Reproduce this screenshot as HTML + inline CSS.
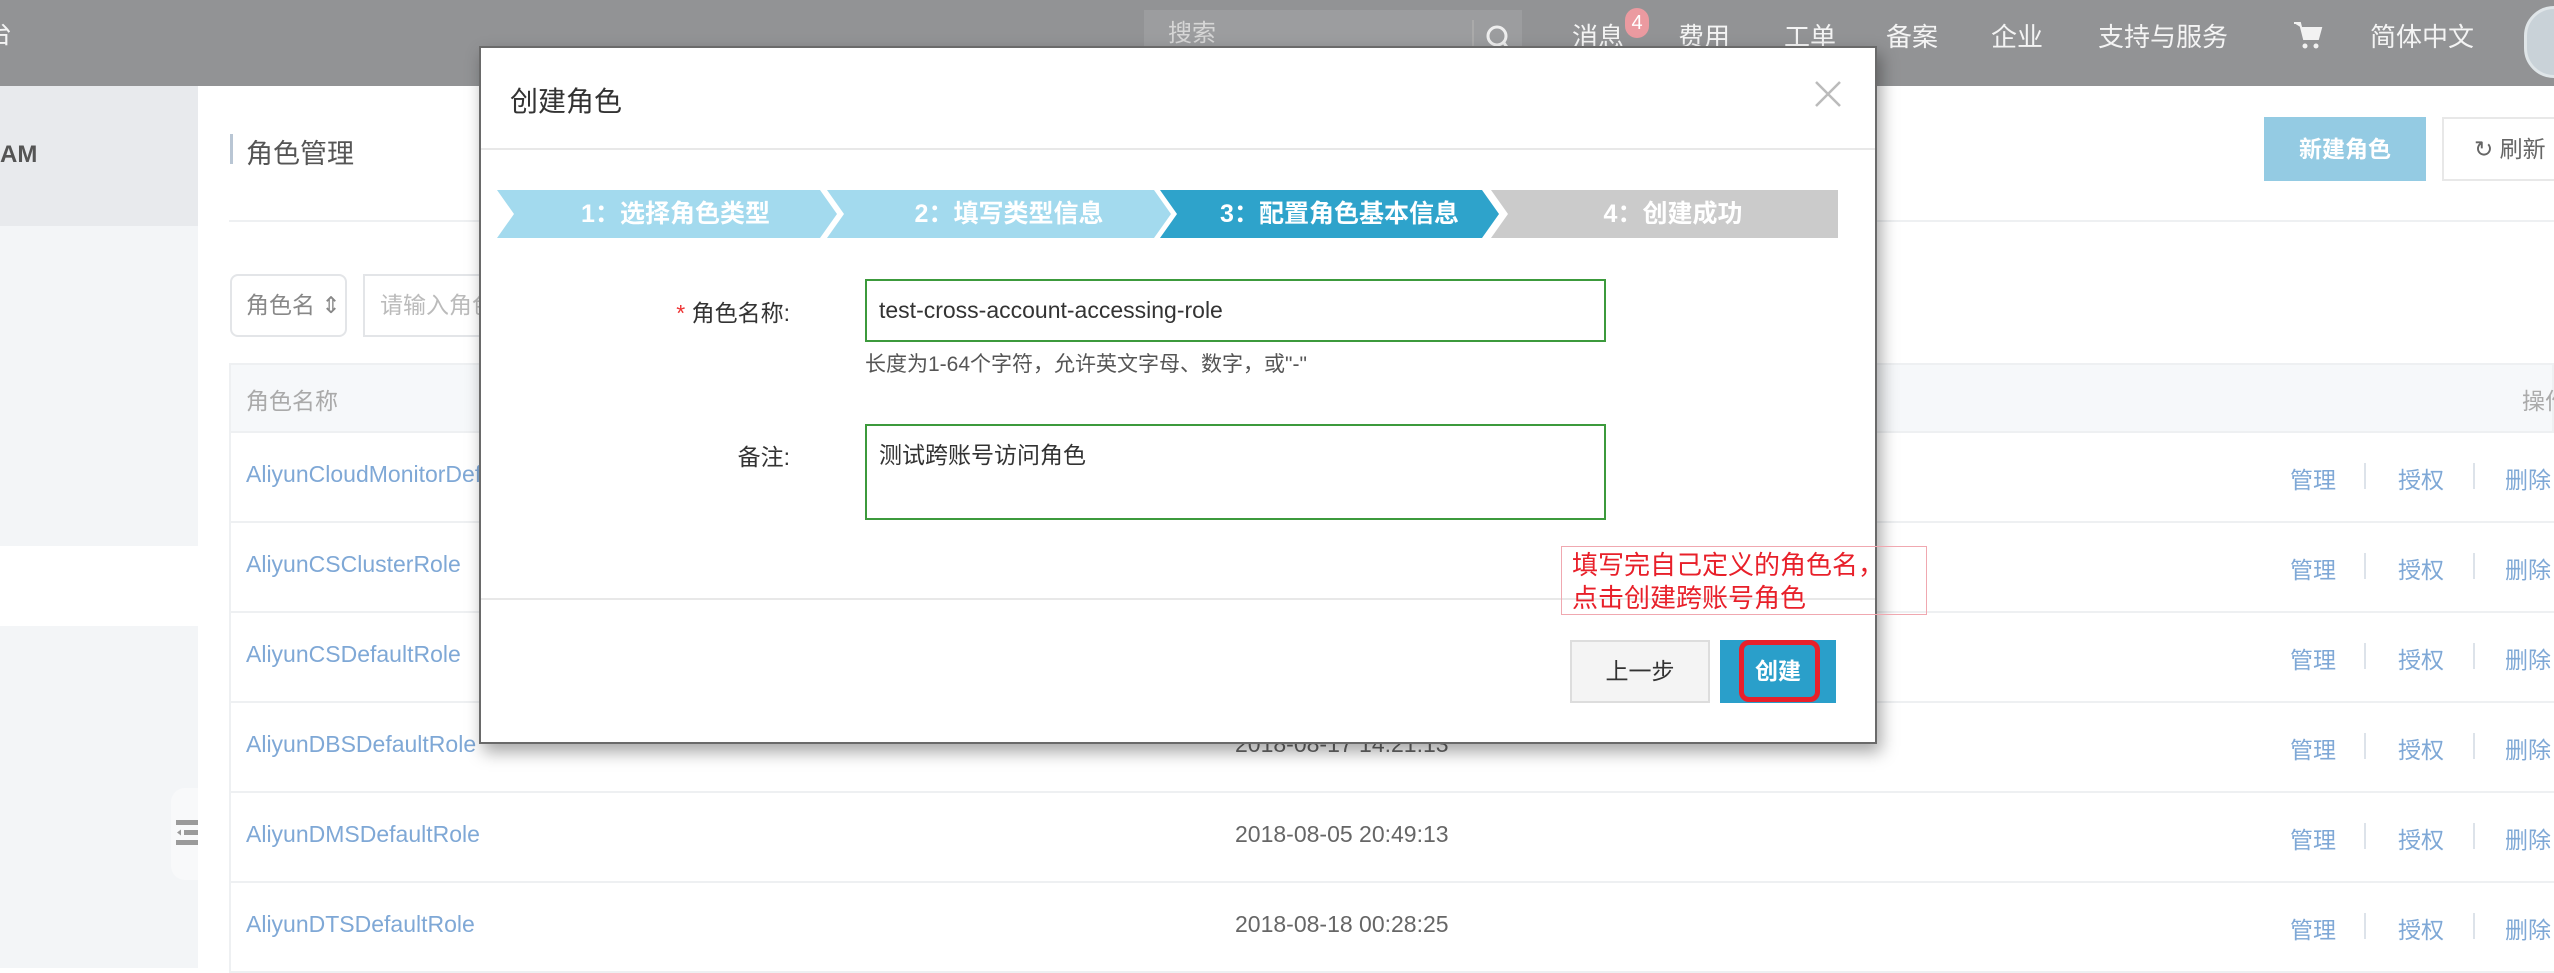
<!DOCTYPE html>
<html><head><meta charset="utf-8">
<style>
*{margin:0;padding:0;box-sizing:border-box;white-space:nowrap}
body{width:2554px;height:968px;overflow:hidden;position:relative;background:#fff;font-family:"Liberation Sans","Noto Sans CJK SC",sans-serif;color:#333}
.a{position:absolute}
.top{left:0;top:0;width:2554px;height:86px;background:#929395}
.nav{top:17px;font-size:26px;color:#f4f4f4;line-height:40px}
.side{left:0;top:86px;width:198px;height:882px;background:#f3f5f7}
.t{font-size:23px;line-height:30px}
.row{left:229px;width:2325px;height:90px;border-bottom:2px solid #eef0f2;border-left:2px solid #eef0f2}
.nm{left:15px;top:28px;color:#7fa8d6;font-size:23px}
.dt{left:1004px;top:28px;color:#666;font-size:23px}
.op{top:28px;color:#7fa8d6;font-size:23px}
.sep{top:32px;width:2px;height:26px;background:#dde3ea}
.step{top:190px;height:48px;color:#fff;font-size:25px;line-height:48px;text-align:center;font-weight:bold}
</style></head><body>
<div class="a top"></div>
<div class="a nav" style="left:-14px;top:14px">台</div>
<div class="a" style="left:1144px;top:10px;width:378px;height:76px;background:#9c9d9f"></div>
<div class="a nav" style="left:1168px;top:14px;color:#d6d6d6;font-size:24px">搜索</div>
<div class="a" style="left:1472px;top:20px;width:2px;height:38px;background:#aaa"></div>
<svg class="a" style="left:1484px;top:22px" width="28" height="32"><circle cx="13" cy="14" r="9" fill="none" stroke="#eee" stroke-width="3"/><line x1="20" y1="21" x2="25" y2="28" stroke="#eee" stroke-width="3"/></svg>
<div class="a nav" style="left:1572px">消息</div>
<div class="a" style="left:1625px;top:8px;width:24px;height:30px;border-radius:12px;background:#eb9aa0;color:#fff;font-size:20px;text-align:center;line-height:30px">4</div>
<div class="a nav" style="left:1678px">费用</div>
<div class="a nav" style="left:1784px">工单</div>
<div class="a nav" style="left:1886px">备案</div>
<div class="a nav" style="left:1991px">企业</div>
<div class="a nav" style="left:2098px">支持与服务</div>
<svg class="a" style="left:2292px;top:20px" width="32" height="32"><path d="M2 3h6l4 16h14l3-11H10" fill="#f2f2f2" stroke="#f2f2f2" stroke-width="2"/><circle cx="13" cy="26" r="2.5" fill="#f2f2f2"/><circle cx="24" cy="26" r="2.5" fill="#f2f2f2"/></svg>
<div class="a nav" style="left:2370px">简体中文</div>
<div class="a" style="left:2524px;top:6px;width:60px;height:72px;border-radius:30px;background:#c9d2d8;border:3px solid #dfe5e8"></div>

<div class="a side"></div>
<div class="a" style="left:0;top:86px;width:198px;height:140px;background:#e8eaed"></div>
<div class="a t" style="left:0;top:140px;font-size:24px;color:#555;font-weight:bold">AM</div>
<div class="a" style="left:0;top:546px;width:198px;height:80px;background:#fff"></div>
<div class="a" style="left:171px;top:788px;width:27px;height:92px;background:#f8f9fa;border-radius:14px 0 0 14px"></div>
<svg class="a" style="left:176px;top:818px" width="22" height="30"><rect x="0" y="2" width="22" height="5" fill="#9a9a9a"/><rect x="8" y="12" width="14" height="5" fill="#9a9a9a"/><path d="M1 14.5l4-3v6z" fill="#9a9a9a"/><rect x="0" y="22" width="22" height="5" fill="#9a9a9a"/></svg>

<div class="a" style="left:230px;top:134px;width:3px;height:30px;background:#b9c6d4"></div>
<div class="a" style="left:246px;top:132px;font-size:27px;color:#555">角色管理</div>
<div class="a" style="left:229px;top:220px;width:2325px;height:2px;background:#eef0f2"></div>
<div class="a" style="left:2264px;top:117px;width:162px;height:64px;background:#94cbe3;color:#fff;font-size:23px;text-align:center;line-height:64px;font-weight:bold">新建角色</div>
<div class="a" style="left:2442px;top:117px;width:130px;height:64px;border:2px solid #e8e8e8;color:#666;font-size:23px;line-height:60px;padding-left:30px">↻ 刷新</div>
<div class="a" style="left:230px;top:274px;width:117px;height:63px;border:2px solid #e3e5e8;border-radius:8px;color:#888;font-size:23px;line-height:59px;padding-left:14px">角色名 ⇕</div>
<div class="a" style="left:363px;top:274px;width:300px;height:63px;border:2px solid #e3e5e8;color:#bbb;font-size:23px;line-height:59px;padding-left:15px">请输入角色</div>
<div class="a" style="left:229px;top:363px;width:2325px;height:70px;background:#f6f8fa;border:2px solid #eef0f2"></div>
<div class="a" style="left:246px;top:382px;color:#aaa;font-size:23px">角色名称</div>
<div class="a" style="left:2522px;top:382px;color:#aaa;font-size:23px">操作</div>

<div class="a row" style="top:433px"><div class="a nm">AliyunCloudMonitorDefaultRole</div></div>
<div class="a row" style="top:523px"><div class="a nm">AliyunCSClusterRole</div></div>
<div class="a row" style="top:613px"><div class="a nm">AliyunCSDefaultRole</div></div>
<div class="a row" style="top:703px"><div class="a nm">AliyunDBSDefaultRole</div><div class="a dt">2018-08-17 14:21:13</div></div>
<div class="a row" style="top:793px"><div class="a nm">AliyunDMSDefaultRole</div><div class="a dt">2018-08-05 20:49:13</div></div>
<div class="a row" style="top:883px"><div class="a nm">AliyunDTSDefaultRole</div><div class="a dt">2018-08-18 00:28:25</div></div>
<div id="ops"></div>
<script>
var h='';[433,523,613,703,793,883].forEach(function(y){h+='<div class="a op" style="left:2290px;top:'+(y+28)+'px">管理</div><div class="a sep" style="left:2364px;top:'+(y+30)+'px"></div><div class="a op" style="left:2398px;top:'+(y+28)+'px">授权</div><div class="a sep" style="left:2473px;top:'+(y+30)+'px"></div><div class="a op" style="left:2505px;top:'+(y+28)+'px">删除</div>'});document.getElementById('ops').outerHTML=h;
</script>

<div class="a" style="left:479px;top:46px;width:1398px;height:698px;background:#fff;border:2px solid #6a6a6a;box-shadow:4px 8px 16px rgba(0,0,0,.35)"></div>
<div class="a" style="left:510px;top:80px;font-size:28px;color:#333">创建角色</div>
<svg class="a" style="left:1814px;top:80px" width="28" height="28"><path d="M2 2L26 26M26 2L2 26" stroke="#bbb" stroke-width="2.5"/></svg>
<div class="a" style="left:481px;top:148px;width:1394px;height:2px;background:#e8e8e8"></div>

<svg class="a" style="left:497px;top:190px" width="1341" height="48">
<polygon points="0,0 323,0 340,24 323,48 0,48 17,24" fill="#a3daee"/>
<polygon points="330,0 657,0 674,24 657,48 330,48 347,24" fill="#a3daee"/>
<polygon points="663,0 985,0 1002,24 985,48 663,48 680,24" fill="#2ea3cb"/>
<polygon points="994,0 1341,0 1341,48 994,48 1011,24" fill="#cbcbcb"/>
</svg>
<div class="a step" style="left:514px;width:323px">1：选择角色类型</div>
<div class="a step" style="left:844px;width:330px">2：填写类型信息</div>
<div class="a step" style="left:1177px;width:325px">3：配置角色基本信息</div>
<div class="a step" style="left:1508px;width:330px">4：创建成功</div>

<div class="a" style="left:600px;top:294px;width:190px;text-align:right;font-size:23px;color:#333"><span style="color:#e33">*</span> 角色名称:</div>
<div class="a" style="left:865px;top:279px;width:741px;height:63px;border:2px solid #3c9a3c;font-size:23px;line-height:59px;padding-left:12px;color:#333">test-cross-account-accessing-role</div>
<div class="a" style="left:865px;top:348px;font-size:21px;color:#555">长度为1-64个字符，允许英文字母、数字，或"-"</div>
<div class="a" style="left:600px;top:438px;width:190px;text-align:right;font-size:23px;color:#333">备注:</div>
<div class="a" style="left:865px;top:424px;width:741px;height:96px;border:2px solid #3c9a3c;font-size:23px;padding:10px 12px;color:#333">测试跨账号访问角色</div>
<div class="a" style="left:481px;top:598px;width:1394px;height:2px;background:#e8e8e8"></div>

<div class="a" style="left:1570px;top:640px;width:140px;height:63px;background:#f4f4f4;border:2px solid #ddd;font-size:23px;text-align:center;line-height:59px;color:#333">上一步</div>
<div class="a" style="left:1720px;top:640px;width:116px;height:63px;background:#2a9fca;color:#fff;font-size:23px;text-align:center;line-height:63px;font-weight:bold">创建</div>
<div class="a" style="left:1739px;top:640px;width:81px;height:62px;border:5px solid #e8202a;border-radius:10px"></div>
<div class="a" style="left:1561px;top:546px;width:366px;height:69px;border:1px solid #f0a8b0;color:#e8202a;font-size:26px;line-height:33px;padding:2px 0 0 10px">填写完自己定义的角色名，<br>点击创建跨账号角色</div>
</body></html>
